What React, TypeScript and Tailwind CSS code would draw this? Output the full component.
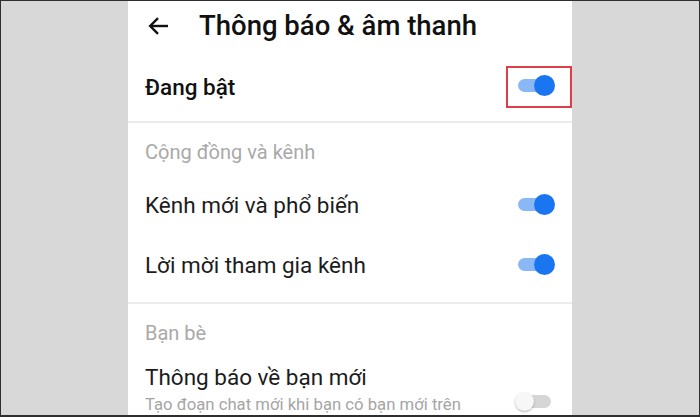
import React from "react";

function Toggle({ on }: { on: boolean }) {
  return (
    <div className="relative w-[37px] h-[20px] shrink-0">
      <div
        className={
          on
            ? "absolute left-0 top-[4px] w-[33px] h-[13px] rounded-full bg-[#8ab8f6]"
            : "absolute left-[1px] top-[4px] w-[35px] h-[13px] rounded-full bg-[#d6d6d6]"
        }
      />
      {on ? (
        <div className="absolute right-0 top-0 w-[21px] h-[21px] rounded-full bg-[#1a76f0]" />
      ) : (
        <div className="absolute left-0 top-[1px] w-[19px] h-[19px] rounded-full bg-[#f7f7f7] shadow-[0_1px_2px_rgba(0,0,0,0.3)]" />
      )}
    </div>
  );
}

function Row({ label, on }: { label: string; on: boolean }) {
  return (
    <div className="h-[60px] flex items-center justify-between pl-[17px] pr-[17px] shrink-0">
      <span className="text-[22.5px] text-[#1c1c1c] mt-[3px]">{label}</span>
      <Toggle on={on} />
    </div>
  );
}

export default function App() {
  return (
    <div
      className="w-[700px] h-[417px] border-x border-t border-b-2 border-[#2e2e2e] bg-[#d8d8d8] flex justify-center overflow-hidden"
      style={{ fontFamily: "Roboto, 'Noto Sans', sans-serif" }}
    >
      <div className="w-[444px] h-full bg-white flex flex-col overflow-hidden">
        {/* header */}
        <div className="h-[50px] flex items-center pl-[20px] shrink-0">
          <svg width="20" height="18" viewBox="0 0 20 18" fill="none" stroke="#111" strokeWidth="2.4">
            <path d="M20 9H2.5" />
            <path d="M10 1.2L2.2 9L10 16.8" />
          </svg>
          <h1 className="ml-[31px] text-[27.5px] font-medium text-[#111]">
            Thông báo &amp; âm thanh
          </h1>
        </div>

        {/* main toggle */}
        <div className="h-[70px] flex items-center justify-between pl-[17px] pr-[17px] shrink-0">
          <span className="text-[22.5px] font-medium text-[#111] mt-[3px]">Đang bật</span>
          <div className="relative mb-[3px]">
            <Toggle on={true} />
            <div className="absolute left-[-12px] top-[-9px] w-[66px] h-[42px] border-2 border-[#dd3f48]" />
          </div>
        </div>
        <div className="h-[2px] bg-[#ececec] shrink-0" />

        {/* community section */}
        <div className="h-[51px] flex items-center pl-[17px] pt-[6px] shrink-0">
          <span className="text-[20px] text-[#a9a9a9]">Cộng đồng và kênh</span>
        </div>
        <Row label="Kênh mới và phổ biến" on={true} />
        <Row label="Lời mời tham gia kênh" on={true} />
        <div className="h-[8px] shrink-0" />
        <div className="h-[2px] bg-[#ececec] shrink-0" />

        {/* friends section */}
        <div className="h-[55px] flex items-center pl-[17px] pt-[3px] shrink-0">
          <span className="text-[20px] text-[#a9a9a9]">Bạn bè</span>
        </div>
        <div className="flex items-start justify-between pl-[17px] pr-[20px] shrink-0">
          <div className="flex flex-col mt-[3px]">
            <span className="text-[22.5px] text-[#1c1c1c] leading-[30px]">Thông báo về bạn mới</span>
            <span className="text-[16.7px] text-[#a5a5a5] leading-[24px] mt-[1px]">
              Tạo đoạn chat mới khi bạn có bạn mới trên
            </span>
          </div>
          <div className="mt-[32px]">
            <Toggle on={false} />
          </div>
        </div>
      </div>
    </div>
  );
}
